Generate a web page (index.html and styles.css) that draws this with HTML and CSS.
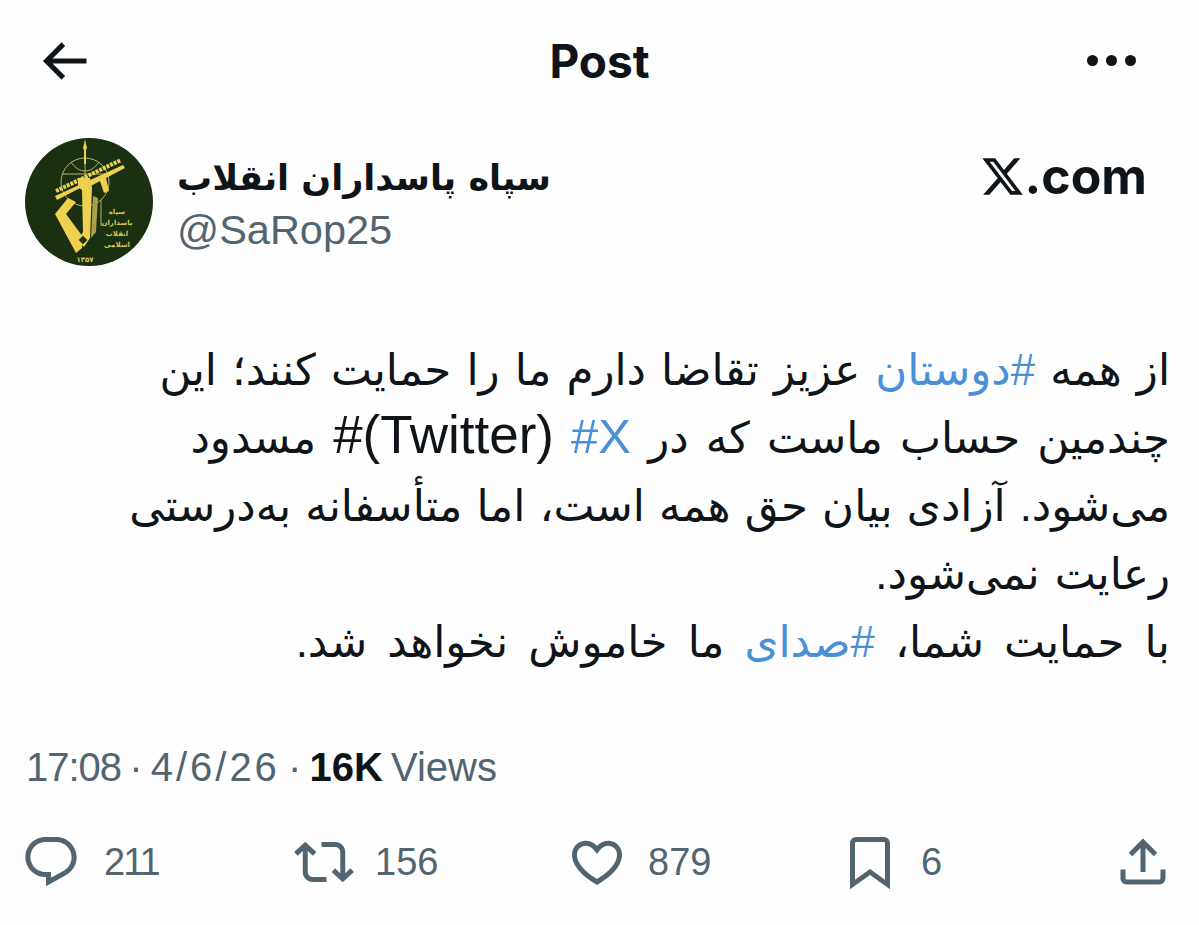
FILE: index.html
```html
<!DOCTYPE html>
<html lang="fa">
<head>
  <meta charset="UTF-8">
  <meta name="viewport" content="width=device-width, initial-scale=1.0">
  <title>Post</title>
  <link rel="stylesheet" href="styles.css">
</head>
<body>

  <header class="topbar">
    <div class="topbar-side">
      <svg class="back-icon" viewBox="0 0 24 24"><path d="M7.414 13l5.043 5.04-1.414 1.42L3.586 12l7.457-7.46 1.414 1.42L7.414 11H21v2H7.414z"/></svg>
    </div>
    <span class="topbar-title">Post</span>
    <div class="topbar-side topbar-side-end">
      <span class="more-dots"><i></i><i></i><i></i></span>
    </div>
  </header>

  <section class="author">
    <svg class="avatar" viewBox="0 0 128 128">
      <circle cx="64" cy="64" r="64" fill="#1a3010"/>
      <circle class="emblem-ring" cx="60" cy="44" r="24"/>
      <path class="emblem-ring" d="M60 20v48M38 36h44M46 24c8 12 20 12 28 0"/>
      <path class="emblem-gold" d="M59 6l1-5 1 5 1 4-1 2v14h-2V12l-1-2z"/>
      <path class="emblem-text-band" d="M31 53L96 22"/>
      <path class="emblem-gold" d="M98 27l2 3-19 10 3 13-5 2-4-12-13 7-3-2-27 14-2-4z"/>
      <path class="emblem-gold" d="M53 40h12l2 10-2 50-6 9-6-7 5-8-1-42-4-3z"/>
      <path class="emblem-gold" d="M43 60l8 4-10 12 17 23-1 11-6 5L30 76z"/>
      <rect x="55" y="99" width="6" height="6" fill="#1a3010" transform="rotate(45 58 102)"/>
      <path class="emblem-olive" d="M68 58l-2 42 5-6 2-34z"/>
      <path class="emblem-ring" d="M76 62v26"/>
      <text class="emblem-text" x="92" y="76">سپاه</text>
      <text class="emblem-text" x="92" y="87">پاسداران</text>
      <text class="emblem-text" x="92" y="98">انقلاب</text>
      <text class="emblem-text" x="92" y="109">اسلامی</text>
      <text class="emblem-text" x="60" y="124">۱۳۵۷</text>
    </svg>
    <div class="author-names">
      <div class="author-name" dir="rtl">سپاه پاسداران انقلاب</div>
      <div class="author-handle">@SaRop25</div>
    </div>
    <div class="source">
      <svg class="x-logo" viewBox="0 0 24 24"><path d="M18.244 2.25h3.308l-7.227 8.26 8.502 11.24H16.17l-5.214-6.817L4.99 21.75H1.68l7.73-8.835L1.254 2.25H8.08l4.713 6.231zm-1.161 17.52h1.833L7.084 4.126H5.117z"/></svg>
      <span class="source-text">.com</span>
    </div>
  </section>

  <p class="post-text" dir="rtl">
    از همه <a href="#">#دوستان</a> عزیز تقاضا دارم ما را حمایت کنند؛ این<br>
    <span class="line-mid">چندمین حساب ماست که در <a href="#"><bdi class="latin" dir="ltr">#X</bdi></a> <bdi class="latin latin-wide" dir="ltr">#(Twitter)</bdi> مسدود</span><br>
    <span class="line-tight">می‌شود. آزادی بیان حق همه است، اما متأسفانه به‌درستی</span><br>
    رعایت نمی‌شود.<br>
    <span class="wide-line">با حمایت شما، <a href="#">#صدای</a> ما خاموش نخواهد شد.</span>
  </p>

  <div class="meta"><span class="meta-time">17:08</span> · <span class="meta-date">4/6/26</span> · <b>16K</b> Views</div>

  <footer class="actions">
    <div class="action">
      <svg viewBox="0 0 24 24"><path d="M1.751 10c0-4.42 3.584-8 8.005-8h4.366c4.49 0 8.129 3.64 8.129 8.13 0 2.96-1.607 5.68-4.196 7.11l-8.054 4.46v-3.69h-.067c-4.49.1-8.183-3.51-8.183-8.01zm8.005-6c-3.317 0-6.005 2.69-6.005 6 0 3.37 2.77 6.08 6.138 6.01l.351-.01h1.761v2.3l5.087-2.81c1.951-1.08 3.163-3.13 3.163-5.36 0-3.39-2.744-6.13-6.129-6.13H9.756z"/></svg>
      <span class="count-tight">211</span>
    </div>
    <div class="action">
      <svg viewBox="0 0 24 24"><path d="M4.5 3.88l4.432 4.14-1.364 1.46L5.5 7.55V16c0 1.1.896 2 2 2H13v2H7.5c-2.209 0-4-1.79-4-4V7.55L1.432 9.48.068 8.02 4.5 3.88zM16.5 6H11V4h5.5c2.209 0 4 1.79 4 4v8.45l2.068-1.93 1.364 1.46-4.432 4.14-4.432-4.14 1.364-1.46 2.068 1.93V8c0-1.1-.896-2-2-2z"/></svg>
      <span>156</span>
    </div>
    <div class="action">
      <svg viewBox="0 0 24 24"><path d="M16.697 5.5c-1.222-.06-2.679.51-3.89 2.16l-.805 1.09-.806-1.09C9.984 6.01 8.526 5.44 7.304 5.5c-1.243.07-2.349.78-2.91 1.91-.552 1.12-.633 2.78.479 4.82 1.074 1.97 3.257 4.27 7.129 6.61 3.87-2.34 6.052-4.64 7.126-6.61 1.111-2.04 1.03-3.7.477-4.82-.561-1.13-1.666-1.84-2.908-1.91zm4.187 7.69c-1.351 2.48-4.001 5.12-8.379 7.67l-.503.3-.504-.3c-4.379-2.55-7.029-5.19-8.382-7.67-1.36-2.5-1.41-4.86-.514-6.67.887-1.79 2.647-2.91 4.601-3.01 1.651-.09 3.368.56 4.798 2.01 1.429-1.45 3.146-2.1 4.796-2.01 1.954.1 3.714 1.22 4.601 3.01.896 1.81.846 4.17-.514 6.67z"/></svg>
      <span>879</span>
    </div>
    <div class="action">
      <svg viewBox="0 0 24 24"><path d="M4 4.5C4 3.12 5.119 2 6.5 2h11C18.881 2 20 3.12 20 4.5v18.44l-8-5.71-8 5.71V4.5zM6.5 4c-.276 0-.5.22-.5.5v14.56l6-4.29 6 4.29V4.5c0-.28-.224-.5-.5-.5h-11z"/></svg>
      <span>6</span>
    </div>
    <div class="action">
      <svg viewBox="0 0 24 24"><path d="M12 2.59l5.7 5.7-1.41 1.42L13 6.41V16h-2V6.41l-3.3 3.3-1.41-1.42L12 2.59zM21 15l-.02 3.51c0 1.38-1.12 2.49-2.5 2.49H5.5C4.11 21 3 19.88 3 18.5V15h2v3.5c0 .28.22.5.5.5h12.98c.28 0 .5-.22.5-.5L19 15h2z"/></svg>
    </div>
  </footer>

</body>
</html>
```

FILE: styles.css
```css
body {
  font-family: "Liberation Sans", Arial, sans-serif;
  margin: 0;
  padding: 0;
  height: 925px;
  overflow: hidden;
  background-color: #fefefe;
  color: #0f1419;
}

.topbar {
  height: 122px;
  padding: 0 34px;
  display: flex;
  align-items: center;
}

.topbar-side {
  flex: 1;
  display: flex;
}

.topbar-side-end {
  justify-content: flex-end;
}

.back-icon {
  width: 60px;
  height: 60px;
  fill: #0f1419;
}

.topbar-title {
  font-family: Inter, sans-serif;
  font-weight: 700;
  font-size: 46px;
}

.more-dots {
  display: flex;
  gap: 8px;
  margin: 0 29px 2px 0;
}

.more-dots i {
  width: 11px;
  height: 11px;
  border-radius: 50%;
  background-color: #0f1419;
}

.author {
  display: flex;
  align-items: center;
  padding: 16px 52px 0 25px;
}

.avatar {
  width: 128px;
  height: 128px;
  flex-shrink: 0;
}

.emblem-ring {
  fill: none;
  stroke: #b9b36c;
  stroke-width: 1;
}

.emblem-text-band {
  fill: none;
  stroke: #e6cf5a;
  stroke-width: 4;
  stroke-dasharray: 3 1;
}

.emblem-gold {
  fill: #efd050;
}

.emblem-olive {
  fill: #a9a04a;
}

.emblem-text {
  font-family: "DejaVu Sans", sans-serif;
  font-size: 7px;
  font-weight: 700;
  fill: #d9c45c;
  text-anchor: middle;
}

.author-names {
  margin-left: 24px;
  padding-top: 3px;
}

.author-name {
  font-family: "DejaVu Sans", sans-serif;
  font-weight: 700;
  font-size: 35px;
  line-height: 52px;
}

.author-handle {
  font-size: 41.5px;
  line-height: 52px;
  color: #536471;
}

.source {
  margin-left: auto;
  margin-bottom: 52px;
  display: flex;
  align-items: baseline;
}

.x-logo {
  width: 45px;
  height: 47px;
  fill: #0f1419;
  align-self: center;
}

.source-text {
  font-family: Inter, sans-serif;
  font-weight: 700;
  font-size: 50px;
}

.post-text {
  margin: 70px 29px 0 0;
  font-family: "Liberation Sans", "DejaVu Sans", sans-serif;
  font-size: 43.6px;
  line-height: 68px;
  word-spacing: 3px;
}

.post-text a {
  color: #4a90d9;
  text-decoration: none;
}

.latin {
  font-size: 49px;
  line-height: 1;
}

.latin-wide {
  font-size: 53px;
}

.line-mid {
  word-spacing: 5px;
}

.line-tight {
  word-spacing: 2px;
}

.wide-line {
  word-spacing: 8px;
}

.meta {
  margin: 66px 0 0 26px;
  font-size: 40px;
  line-height: 50px;
  color: #536471;
  word-spacing: -3px;
}

.meta b {
  color: #0f1419;
}

.meta-time {
  letter-spacing: -1px;
}

.meta-date {
  letter-spacing: 3px;
}

.actions {
  display: grid;
  grid-template-columns: repeat(4, 273px) auto;
  padding: 40px 28px 0 21px;
}

.action {
  display: flex;
  align-items: center;
  gap: 21px;
  font-size: 38px;
  color: #536471;
}

.action svg {
  width: 60px;
  height: 60px;
  fill: #536471;
}

.count-tight {
  letter-spacing: -2px;
  margin-left: 2px;
}
```
